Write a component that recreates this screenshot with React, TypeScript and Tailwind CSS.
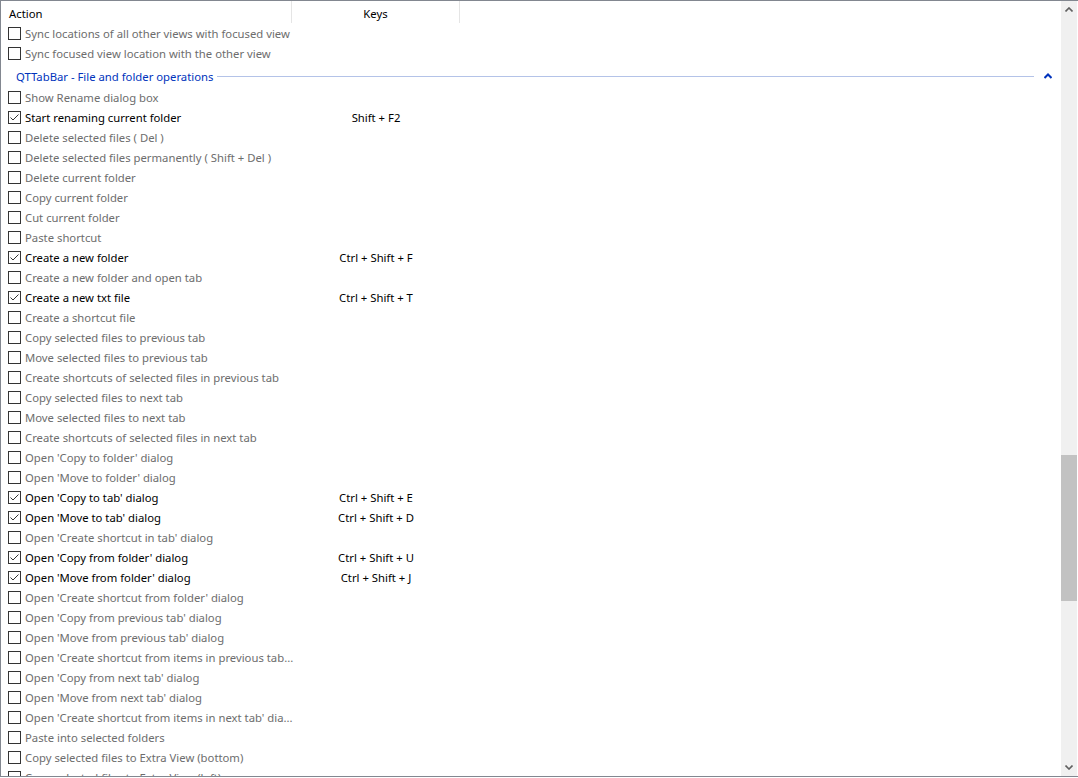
import { memo } from 'react';

type Row = { label: string; keys?: string };

const TOP: Row[] = [
  { label: 'Sync locations of all other views with focused view' },
  { label: 'Sync focused view location with the other view' },
];

const FILE_OPS: Row[] = [
  { label: 'Show Rename dialog box' },
  { label: 'Start renaming current folder', keys: 'Shift + F2' },
  { label: 'Delete selected files ( Del )' },
  { label: 'Delete selected files permanently ( Shift + Del )' },
  { label: 'Delete current folder' },
  { label: 'Copy current folder' },
  { label: 'Cut current folder' },
  { label: 'Paste shortcut' },
  { label: 'Create a new folder', keys: 'Ctrl + Shift + F' },
  { label: 'Create a new folder and open tab' },
  { label: 'Create a new txt file', keys: 'Ctrl + Shift + T' },
  { label: 'Create a shortcut file' },
  { label: 'Copy selected files to previous tab' },
  { label: 'Move selected files to previous tab' },
  { label: 'Create shortcuts of selected files in previous tab' },
  { label: 'Copy selected files to next tab' },
  { label: 'Move selected files to next tab' },
  { label: 'Create shortcuts of selected files in next tab' },
  { label: "Open 'Copy to folder' dialog" },
  { label: "Open 'Move to folder' dialog" },
  { label: "Open 'Copy to tab' dialog", keys: 'Ctrl + Shift + E' },
  { label: "Open 'Move to tab' dialog", keys: 'Ctrl + Shift + D' },
  { label: "Open 'Create shortcut in tab' dialog" },
  { label: "Open 'Copy from folder' dialog", keys: 'Ctrl + Shift + U' },
  { label: "Open 'Move from folder' dialog", keys: 'Ctrl + Shift + J' },
  { label: "Open 'Create shortcut from folder' dialog" },
  { label: "Open 'Copy from previous tab' dialog" },
  { label: "Open 'Move from previous tab' dialog" },
  { label: "Open 'Create shortcut from items in previous tab..." },
  { label: "Open 'Copy from next tab' dialog" },
  { label: "Open 'Move from next tab' dialog" },
  { label: "Open 'Create shortcut from items in next tab' dia..." },
  { label: 'Paste into selected folders' },
  { label: 'Copy selected files to Extra View (bottom)' },
  { label: 'Copy selected files to Extra View (left)' },
];

const CheckBox = ({ checked }: { checked: boolean }) => (
  <span className="w-[13px] h-[13px] border border-[#333333] bg-white flex items-center justify-center shrink-0">
    {checked && (
      <svg width="11" height="11" viewBox="0 0 11 11">
        <path d="M1.5 5.5 L4 8 L9.5 2.5" fill="none" stroke="#333333" strokeWidth="1" />
      </svg>
    )}
  </span>
);

const ItemRow = ({ row }: { row: Row }) => {
  const checked = !!row.keys;
  return (
    <div className="h-[20px] flex items-center shrink-0">
      <div className="w-[291px] h-[20px] flex items-center pl-[7px] gap-[4px] shrink-0">
        <CheckBox checked={checked} />
        <span className={`whitespace-nowrap leading-[20px] pt-px ${checked ? 'text-black' : 'text-[#6d6d6d]'}`}>
          {row.label}
        </span>
      </div>
      <div className="w-[168px] text-center text-black whitespace-nowrap leading-[20px] pt-px">{row.keys ?? ''}</div>
    </div>
  );
};

const GroupHeader = ({ title }: { title: string }) => (
  <div className="h-[24px] flex items-center shrink-0 pl-[15px] pr-[9px] pt-[2px]">
    <span className="text-[#0033bc] whitespace-nowrap leading-[20px] pt-px">{title}</span>
    <div className="flex-1 h-px bg-[#b4c3e8] ml-[4px] mr-[10px] mt-[1px]" />
    <svg width="8" height="6" viewBox="0 0 8 6">
      <path d="M0.5 5 L4 1.5 L7.5 5" fill="none" stroke="#0033bc" strokeWidth="2" />
    </svg>
  </div>
);

const ScrollBar = () => (
  <div className="w-[16px] bg-[#f0f0f0] flex flex-col shrink-0">
    <div className="h-[17px] flex items-center justify-center">
      <svg width="8" height="5" viewBox="0 0 8 5">
        <path d="M0.5 4.5 L4 1 L7.5 4.5" fill="none" stroke="#606060" strokeWidth="1.6" />
      </svg>
    </div>
    <div className="flex-1 flex flex-col">
      <div className="h-[437px]" />
      <div className="h-[146px] bg-[#c2c2c2]" />
    </div>
    <div className="h-[17px] flex items-center justify-center">
      <svg width="8" height="5" viewBox="0 0 8 5">
        <path d="M0.5 0.5 L4 4 L7.5 0.5" fill="none" stroke="#606060" strokeWidth="1.6" />
      </svg>
    </div>
  </div>
);

const App = () => {
  return (
    <div className="w-[1078px] h-[778px] bg-white overflow-hidden">
      <div
        className="w-[1078px] h-[777px] border-t border-l border-b border-[#828790] flex text-[11.3px] leading-none"
        style={{ fontFamily: '"Noto Sans", "Open Sans", sans-serif' }}
      >
        <div className="flex-1 flex flex-col overflow-hidden">
          <div className="h-[22px] flex shrink-0 text-black">
            <div className="w-[291px] flex items-center pl-[8px] pt-[3px] border-r border-[#e5e5e5]">Action</div>
            <div className="w-[168px] flex items-center justify-center pt-[3px] border-r border-[#e5e5e5]">Keys</div>
          </div>
          {TOP.map((r) => (
            <ItemRow key={r.label} row={r} />
          ))}
          <GroupHeader title="QTTabBar - File and folder operations" />
          {FILE_OPS.map((r) => (
            <ItemRow key={r.label} row={r} />
          ))}
        </div>
        <ScrollBar />
        <div className="w-px bg-white shrink-0" />
      </div>
    </div>
  );
};

export default memo(App);
